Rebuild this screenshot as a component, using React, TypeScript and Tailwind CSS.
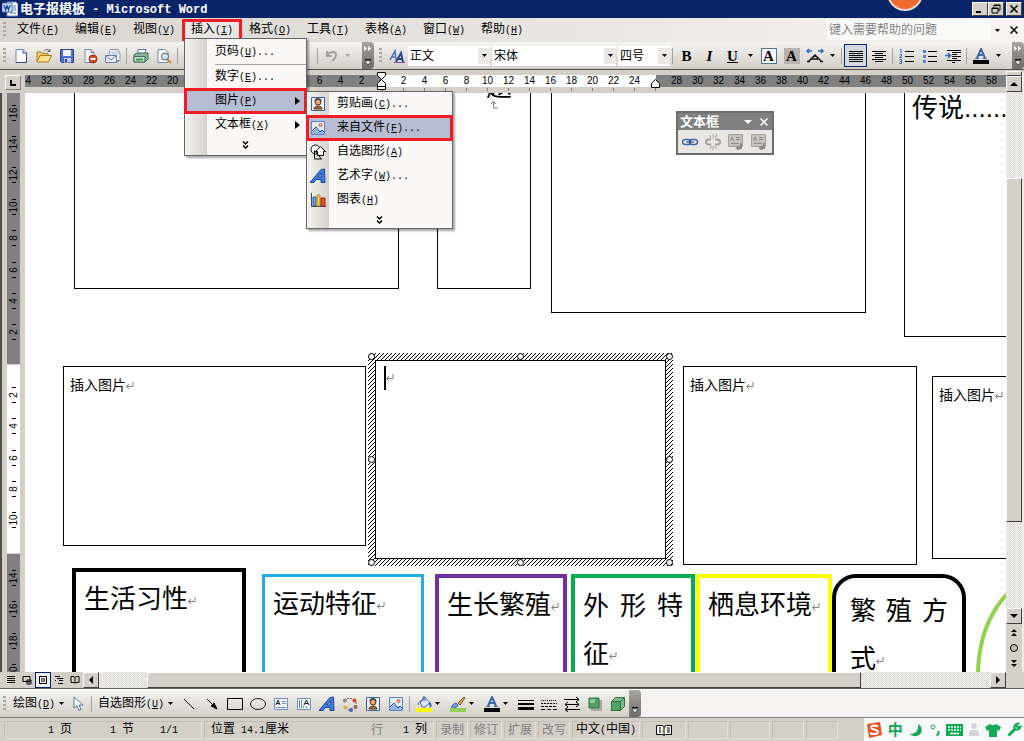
import type { ReactNode } from 'react'

const LATIN = /([\x20-\x7e]+)/

// Chinese UI text with half-width latin; `hot` is the underlined shortcut letter
function Label({ text, hot }: { text: string; hot?: string }) {
  return (
    <span className="whitespace-pre">
      {text.split(LATIN).map((part, i) =>
        i % 2 ? <span key={i} className="font-['Liberation_Mono',monospace] text-[10px]">{part}</span> : part
      )}
      {hot && (
        <span className="font-['Liberation_Mono',monospace] text-[10px]">
          (<span className="underline">{hot}</span>)
        </span>
      )}
    </span>
  )
}

function Down({ className = '' }: { className?: string }) {
  return (
    <svg width="5" height="3" viewBox="0 0 5 3" className={`shrink-0 ${className}`} aria-hidden="true">
      <path d="M0 0h5L2.5 3z" fill="currentColor" />
    </svg>
  )
}

function Svg({ children, size = 16 }: { children: ReactNode; size?: number }) {
  return (
    <svg width={size} height={size} viewBox="0 0 16 16" fill="none" aria-hidden="true" className="shrink-0">
      {children}
    </svg>
  )
}

const icons = {
  word: (
    <Svg>
      <path d="M5 1h9l2 2v12H5z" fill="#fff" stroke="#6d8fd0" />
      <path d="M11 5h3M11 7h3M11 9h3M8 12h6" stroke="#5577bb" />
      <path d="M0 2h10v9H0z" fill="#e8eefc" stroke="#3a62b8" />
      <path d="M2 4l1.500 5L5 5l1.500 4L8 4" stroke="#1e49a8" strokeWidth="1.500" />
    </Svg>
  ),
  page: (
    <Svg>
      <path d="M3 1.500h7l3.500 3.500v9.500H3z" fill="#fff" stroke="#6e86b5" />
      <path d="M10 1.500V5h3.500" fill="#c9d6ee" stroke="#3f5e9c" />
      <path d="M13.500 5v9.500H3" stroke="#2f4a80" />
    </Svg>
  ),
  open: (
    <Svg>
      <path d="M1 14V4h4l1 1.500h6V8" fill="#f3cf6a" stroke="#a87a1b" />
      <path d="M1 14l3-6.500h11.500L12.500 14z" fill="#fbdf8b" stroke="#a87a1b" />
      <path d="M8 3c2-2 4-2 5.500 0M14 1v2.500h-2.500" stroke="#555" />
    </Svg>
  ),
  save: (
    <Svg>
      <path d="M1.500 1.500h13v13h-12l-1-1z" fill="#4f6fd0" stroke="#283f94" />
      <path d="M4 2h8v6H4z" fill="#eef2fb" />
      <path d="M5 10h7v4.500H5z" fill="#c8d2ec" />
      <path d="M6 11h2v3H6z" fill="#283f94" />
    </Svg>
  ),
  permission: (
    <Svg>
      <path d="M3 1.500h6l3 3v10H3z" fill="#fff" stroke="#6e86b5" />
      <path d="M9 1.500v3h3" fill="#c9d6ee" stroke="#6e86b5" />
      <circle cx="11" cy="11" r="4" fill="#d8432c" stroke="#a42a18" />
      <path d="M8.500 11h5" stroke="#fff" strokeWidth="2" />
    </Svg>
  ),
  mail: (
    <Svg>
      <path d="M4 7l1-5.500h8L15 6v6.500h-3" fill="#fff" stroke="#8493b5" />
      <path d="M6 4h7M6 6h8" stroke="#9db0d6" />
      <path d="M.5 7.500h11v7H.5z" fill="#e6ebf6" stroke="#6d7fa8" />
      <path d="M.5 7.500L6 12l5.500-4.500M12 14l3-2" stroke="#6d7fa8" />
    </Svg>
  ),
  print: (
    <Svg>
      <path d="M5 6V1.500h8L11.500 7" fill="#fff" stroke="#5e77a8" />
      <path d="M1 7l3-2h11v6l-3 3H1z" fill="#8cb29a" stroke="#3d6b58" />
      <path d="M1 8.500h11v5.500H1z" fill="#c9ddd0" stroke="#3d6b58" />
      <path d="M3 11.500h7" stroke="#2ba84b" strokeWidth="2" />
    </Svg>
  ),
  preview: (
    <Svg>
      <path d="M2 1.500h7l3 3v10H2z" fill="#fff" stroke="#6e86b5" />
      <circle cx="9" cy="8.500" r="3.500" fill="#d3e4f7" stroke="#55616f" />
      <path d="M11.500 11.500L15 15" stroke="#c88a24" strokeWidth="2" />
    </Svg>
  ),
  undo: (
    <Svg>
      <path d="M3 3v5h5M3.500 7.500C5 3.500 12 2.500 12 7c0 3-2 4-3.500 6" stroke="#a5a29c" strokeWidth="2" />
    </Svg>
  ),
  styles: (
    <Svg>
      <path d="M1 12L6 3l1 9M2.500 9h4" stroke="#4a6fc0" strokeWidth="1.500" />
      <path d="M7 14l5-9 2 9M8.500 11h5" stroke="#2b4690" strokeWidth="2" />
      <path d="M5 14.500h11" stroke="#8c4fa8" />
    </Svg>
  ),
  scale: (
    <svg width="18" height="16" viewBox="0 0 18 16" fill="none" aria-hidden="true" className="shrink-0">
      <path d="M1 13.500h3M14 13.500h3M3 13L9 7l6 6M6 11h6" stroke="#111" strokeWidth="1.500" />
      <path d="M1 3h5M3 1L1 3l2 2M17 3h-5M15 1l2 2-2 2" stroke="#2f63c4" strokeWidth="1.500" />
    </svg>
  ),
  justify: (
    <Svg>
      <path d="M1 3.500h14M1 5.500h14M1 7.500h14M1 9.500h14M1 11.500h14M1 13.500h14" stroke="#000" shapeRendering="crispEdges" />
    </Svg>
  ),
  center: (
    <Svg>
      <path d="M1 3.500h14M4 5.500h8M1 7.500h14M4 9.500h8M1 11.500h14M4 13.500h8" stroke="#000" shapeRendering="crispEdges" />
    </Svg>
  ),
  numbered: (
    <Svg>
      <path d="M6 3.500h9M6 8.500h9M6 13.500h9" stroke="#000" shapeRendering="crispEdges" />
      <path d="M1 2l1-1v4M.5 6.500h2v1.500l-2 1.500h2.500M.5 11.500h2v4h-2M1 13.500h1.500" stroke="#3767c2" />
    </Svg>
  ),
  bullets: (
    <Svg>
      <path d="M6 3.500h9M6 8.500h9M6 13.500h9" stroke="#000" shapeRendering="crispEdges" />
      <path d="M1 2h3v3H1zM1 7h3v3H1zM1 12h3v3H1z" fill="#4f7fd0" />
    </Svg>
  ),
  indent: (
    <Svg>
      <path d="M2 2.500h14M7 4.500h9M7 6.500h5M7 8.500h9M7 10.500h5M2 12.500h14M7 14.500h3" stroke="#000" shapeRendering="crispEdges" />
      <path d="M0 7.500h5M3 5l2.500 2.500L3 10" stroke="#3767c2" strokeWidth="1.500" />
    </Svg>
  ),
  clipart: (
    <Svg>
      <path d="M1.500 1.500h13v13h-13z" fill="#eef3fb" stroke="#3c5d9e" />
      <path d="M4 13c0-4 8-4 8 0z" fill="#b06a3a" stroke="#5a3415" />
      <circle cx="8" cy="6" r="3" fill="#e6a676" stroke="#5a3415" />
      <path d="M5 5c1-3 5-3 6 0" stroke="#333" strokeWidth="1.500" />
    </Svg>
  ),
  picture: (
    <Svg>
      <path d="M1.500 1.500h13v13h-13z" fill="#e3eefb" stroke="#5c83bf" />
      <path d="M2 12l4-4 3 3 2-1 3 3v1H2z" fill="#8fb4e6" />
      <path d="M2 11l4-4 4 5 2-2 2.500 2.500" stroke="#244a8f" />
      <circle cx="10.500" cy="5" r="1.500" fill="#f6c9a5" stroke="#d3572d" />
    </Svg>
  ),
  shapes: (
    <Svg>
      <circle cx="5.500" cy="5.500" r="4.500" fill="#fff" stroke="#000" />
      <path d="M10.500 2.500l5 5h-2v4h-6v-4h-2z" fill="#fff" stroke="#000" />
      <path d="M4.500 6.500v8.500h7z" stroke="#000" />
    </Svg>
  ),
  wordart: (
    <Svg>
      <path d="M0 14.500L11 1.500l3.500-.5.500 13.500h-4v-3H6l-2 3zM8 9h3V5z" fill="#3f78d8" stroke="#1d4a9e" fillRule="evenodd" />
    </Svg>
  ),
  chart: (
    <Svg>
      <path d="M1.500 1v13.500H16" stroke="#444" />
      <path d="M3 5h3v9H3z" fill="#6fa0e8" stroke="#2c56a0" />
      <path d="M7 3h3v11H7z" fill="#f8d64e" stroke="#a7801a" />
      <path d="M11 6h4v8h-4z" fill="#e2573a" stroke="#8f2613" />
    </Svg>
  ),
  pointer: (
    <Svg>
      <path d="M4 1v11l3-2.500 2 5 2-1-2-4.500h4z" fill="#fff" stroke="#55739f" />
    </Svg>
  ),
  line: (
    <Svg>
      <path d="M3 3l10 10" stroke="#000" />
    </Svg>
  ),
  arrow: (
    <Svg>
      <path d="M3 3l6 6" stroke="#000" />
      <path d="M7 10l3-3 3 6z" fill="#000" stroke="#000" />
    </Svg>
  ),
  rect: (
    <Svg>
      <path d="M.5 2.500h15v11H.5z" stroke="#000" />
    </Svg>
  ),
  ellipse: (
    <Svg>
      <ellipse cx="8" cy="8" rx="7.500" ry="5.500" stroke="#222" />
    </Svg>
  ),
  textbox: (
    <Svg>
      <path d="M1.500 2.500h13v11h-13z" fill="#f2f6fd" stroke="#6c8fcb" />
      <path d="M3 9l2-5 2 5M4 7.500h2" stroke="#222" />
      <path d="M9 5.500h4M9 7.500h4M3 11.500h10" stroke="#6c8fcb" />
    </Svg>
  ),
  vtextbox: (
    <Svg>
      <path d="M1.500 2.500h13v11h-13z" fill="#f2f6fd" stroke="#6c8fcb" />
      <path d="M8 9l2.500-5L13 9M9 7.500h3" stroke="#222" />
      <path d="M3.500 4v8M5.500 4v8M7.500 10v2M10.500 10v2" stroke="#6c8fcb" />
    </Svg>
  ),
  diagram: (
    <Svg>
      <path d="M5 2.500h4l2 1M14 6v4M3 12l-1-2M6 14h4M2 5v1" stroke="#666" strokeDasharray="2 1" />
      <circle cx="3" cy="4.500" r="2" fill="#8a8a8a" />
      <circle cx="12.500" cy="4.500" r="2" fill="#cf4a2c" />
      <circle cx="3.500" cy="11.500" r="2" fill="#d1b13c" />
      <circle cx="9" cy="14" r="2" fill="#4a64c4" />
      <circle cx="13.500" cy="11" r="2" fill="#8a6a58" />
    </Svg>
  ),
  fill: (
    <Svg>
      <path d="M4 5.500l5-4 5 5-5 4.500h-3z" fill="#dbe7f8" stroke="#4a6ea8" />
      <path d="M7 5V1h2v4M2 9c0-2 2-4 4-4" stroke="#3c5d9e" />
      <path d="M13 7c2 1 2 3 1 4" stroke="#2f63c4" strokeWidth="2" />
      <path d="M0 12h16v4H0z" fill="#ff0" />
    </Svg>
  ),
  brush: (
    <Svg>
      <path d="M1 11c2-1 2-4 5-4l2 2c0 2-3 3-7 2z" fill="#6d9de0" stroke="#3862a8" />
      <path d="M8 7l6-6 1 1-5 7z" fill="#e4a849" stroke="#7c5317" />
      <path d="M0 12h16v4H0z" fill="#92d050" />
    </Svg>
  ),
  fontcolor: (
    <Svg>
      <path d="M4 10L8 1l4 9M5.500 7h5" stroke="#3f66ad" strokeWidth="2" />
      <path d="M2 10.500h4M10 10.500h4" stroke="#3f66ad" />
      <path d="M0 12h16v4H0z" fill="#000" />
    </Svg>
  ),
  lineStyle: (
    <Svg>
      <path d="M0 4h16v1H0zM0 7h16v2H0zM0 11h16v3H0z" fill="#000" />
    </Svg>
  ),
  dashStyle: (
    <Svg>
      <path d="M0 4.500h16" stroke="#000" strokeDasharray="1 1" />
      <path d="M0 7.500h16" stroke="#000" strokeDasharray="2 1" />
      <path d="M0 10.500h16" stroke="#000" strokeDasharray="3 1" />
      <path d="M0 13.500h16" stroke="#000" strokeDasharray="4 2" />
    </Svg>
  ),
  arrowStyle: (
    <Svg>
      <path d="M0 3.500h15M12 1l3 2.500L12 6M1 8.500h14M4 6L1 8.500 4 11M12 6l3 2.500-3 2.500M1 13.500h15M4 11l-3 2.500L4 16" stroke="#000" />
    </Svg>
  ),
  shadow: (
    <Svg>
      <path d="M4 4h11v11H4z" fill="#a9a9a2" />
      <path d="M2 2h10v10H2z" fill="#4fa365" stroke="#2c7443" />
      <path d="M3 3h5v4H3z" fill="#8bc99a" />
    </Svg>
  ),
  cube: (
    <Svg>
      <path d="M1.500 5.500l4-4h9v9l-4 4h-9z" fill="#7fb98d" stroke="#2c7443" />
      <path d="M1.500 5.500h9v9h-9z" fill="#4fa365" stroke="#2c7443" />
      <path d="M10.500 5.500l4-4" stroke="#2c7443" />
    </Svg>
  ),
  link: (
    <Svg>
      <rect x=".5" y="5.500" width="8" height="5" rx="2.500" stroke="#3f66a8" strokeWidth="1.500" />
      <rect x="7.500" y="5.500" width="8" height="5" rx="2.500" stroke="#3f66a8" strokeWidth="1.500" />
      <path d="M4 8h8" stroke="#1f3f7c" />
    </Svg>
  ),
  unlink: (
    <Svg>
      <path d="M6 5.500H3.500a2.500 2.500 0 000 5H6M10 5.500h2.500a2.500 2.500 0 010 5H10" stroke="#a5a29c" strokeWidth="2" />
      <path d="M8 0v4M4.500 1l1.500 3M12 0l-2 4M8 12v4M5 15l1.500-3M11.500 15L10 12" stroke="#a5a29c" />
    </Svg>
  ),
  boxPrev: (
    <Svg>
      <path d="M.5.5h14v12H.5z" fill="#c6c4bf" stroke="#a5a29c" />
      <path d="M2.500 7L4 3l1.500 4M8 3.500h4M8 5.500h4M3 9.500h8" stroke="#8e8c87" />
      <path d="M13 9v5h-3M11 12l-2 2 2 2" stroke="#8e8c87" strokeWidth="2" />
    </Svg>
  ),
}

function Tool({ name, label, active }: { name: keyof typeof icons; label: string; active?: boolean }) {
  return (
    <button
      aria-label={label}
      className={`flex h-[23px] w-[23px] shrink-0 items-center justify-center ${active ? 'border border-[#0a246a] bg-[#d4d7e2]' : ''}`}
    >
      {icons[name]}
    </button>
  )
}

function Grip() {
  return <span className="mx-[3px] h-4 w-[3px] shrink-0 bg-[repeating-linear-gradient(#aaa8a3_0_2px,transparent_2px_4px)]" />
}

function Sep() {
  return <span className="mx-0.5 h-4 w-px shrink-0 bg-[#a6a49e]" />
}

function EndCap({ double }: { double?: boolean }) {
  return (
    <button aria-label="工具栏选项" className="flex h-full w-3 shrink-0 flex-col items-center justify-end gap-2 rounded-r-sm bg-linear-to-b from-[#a8a6a2] to-[#6f6d69] pb-1">
      {double && (
        <svg width="8" height="5" viewBox="0 0 8 5" aria-hidden="true">
          <path d="M0 0l3 2.500L0 5zM4 0l3 2.500L4 5z" fill="#fff" />
        </svg>
      )}
      <svg width="6" height="6" viewBox="0 0 6 6" aria-hidden="true">
        <path d="M0 0h6v1H0z" fill="#000" />
        <path d="M0 2h6L3 6z" fill="#fff" stroke="#000" strokeWidth=".5" />
      </svg>
    </button>
  )
}

function Combo({ label, value, className }: { label: string; value: string; className: string }) {
  return (
    <label className={`flex h-5 shrink-0 items-center bg-white ${className}`}>
      <select aria-label={label} className="min-w-0 flex-1 appearance-none pl-0.5 leading-5 outline-none">
        <option>{value}</option>
      </select>
      <span className="flex h-4 w-3 items-center justify-center bg-[#ebe9e5]">
        <Down />
      </span>
    </label>
  )
}

function WinButton({ label, children }: { label: string; children: ReactNode }) {
  return (
    <button aria-label={label} className="flex h-[14px] w-4 items-center justify-center border border-t-white border-r-[#404040] border-b-[#404040] border-l-white bg-[#d4d0c8]">
      <svg width="10" height="10" viewBox="0 0 10 10" fill="none" stroke="#000" aria-hidden="true">
        {children}
      </svg>
    </button>
  )
}

function TitleBar() {
  return (
    <header className="relative flex h-[18px] shrink-0 items-center overflow-hidden bg-[#0a246a] px-0.5 text-white">
      {icons.word}
      <h1 className="ml-0.5 text-[13px] leading-[18px] font-bold whitespace-pre">
        电子报模板<span className="font-['Liberation_Mono',monospace] text-xs"> - Microsoft Word</span>
      </h1>
      <div className="absolute -top-[25px] right-[101px] h-9 w-9 rounded-full border-2 border-[#e6d9d2] bg-[#ef6a2c]" />
      <div className="ml-auto flex items-center">
        <WinButton label="最小化"><path d="M1 8h5" strokeWidth="2" /></WinButton>
        <WinButton label="还原"><path d="M3 3V1h6v5H7M3 1.500h6M1 4h6v5H1zM1 4.500h6" /></WinButton>
        <span className="w-0.5" />
        <WinButton label="关闭"><path d="M1.500 1.500l7 7M8.500 1.500l-7 7" strokeWidth="1.500" /></WinButton>
      </div>
    </header>
  )
}

const menus = [
  ['文件', 'F'],
  ['编辑', 'E'],
  ['视图', 'V'],
  ['插入', 'I'],
  ['格式', 'O'],
  ['工具', 'T'],
  ['表格', 'A'],
  ['窗口', 'W'],
  ['帮助', 'H'],
]

function Expand() {
  return (
    <button aria-label="展开" className="flex h-4 w-full items-center justify-center">
      <svg width="7" height="8" viewBox="0 0 7 8" fill="none" stroke="#000" strokeWidth="1.500" aria-hidden="true">
        <path d="M1 .5l2.500 2.500L6 .5M1 4.500L3.500 7 6 4.500" />
      </svg>
    </button>
  )
}

function MenuItem({ text, hot, dots, icon, sub, marked, children }: {
  text: string
  hot: string
  dots?: boolean
  icon?: keyof typeof icons
  sub?: boolean
  marked?: boolean
  children?: ReactNode
}) {
  return (
    <li className="relative">
      <button className={`flex h-6 w-full items-center ${marked ? 'bg-[#b6bdd2] outline-3 -outline-offset-2 outline-[#ee1c25]' : ''}`}>
        <span className="flex w-[22px] justify-center">{icon && icons[icon]}</span>
        <span className="ml-2">
          <Label text={text} hot={hot} />
          {dots && <Label text="..." />}
        </span>
        {sub && (
          <svg width="5" height="8" viewBox="0 0 5 8" className="mr-1.5 ml-auto" aria-hidden="true">
            <path d="M0 0l5 4-5 4z" />
          </svg>
        )}
      </button>
      {children}
    </li>
  )
}

const menuPanel =
  'absolute z-20 border border-[#666] bg-[linear-gradient(to_right,#f5f4f2,#d6d2ca_22px,#f9f8f7_22px)] shadow-[2px_2px_2px_rgba(0,0,0,0.35)]'

function InsertMenu() {
  return (
    <ul className={`${menuPanel} top-[18px] left-px w-[123px] pt-px pb-0.5`}>
      <MenuItem text="页码" hot="U" dots />
      <li className="ml-[30px] h-px bg-[#a6a6a6]" />
      <MenuItem text="数字" hot="E" dots />
      <MenuItem text="图片" hot="P" sub marked>
        <ul className={`${menuPanel} top-0.5 left-[121px] w-[147px]`}>
          <MenuItem icon="clipart" text="剪贴画" hot="C" dots />
          <MenuItem icon="picture" text="来自文件" hot="F" dots marked />
          <MenuItem icon="shapes" text="自选图形" hot="A" />
          <MenuItem icon="wordart" text="艺术字" hot="W" dots />
          <MenuItem icon="chart" text="图表" hot="H" />
          <li><Expand /></li>
        </ul>
      </MenuItem>
      <MenuItem text="文本框" hot="X" sub />
      <li><Expand /></li>
    </ul>
  )
}

function MenuBar() {
  return (
    <nav className="flex h-6 shrink-0 items-center bg-linear-to-r from-[#d8d5ce] to-[#f6f5f4] pr-0.5">
      <Grip />
      {menus.map(([text, hot]) => (
        <div key={text} className="relative">
          <button className={`h-5 w-[58px] ${text === '插入' ? 'bg-[#e9e7e3] outline-3 -outline-offset-2 outline-[#ee1c25]' : ''}`}>
            <Label text={text} hot={hot} />
          </button>
          {text === '插入' && <InsertMenu />}
        </div>
      ))}
      <input
        aria-label="键入需要帮助的问题"
        placeholder="键入需要帮助的问题"
        className="ml-auto h-5 w-[164px] bg-[#fafaf9] pl-0.5 outline-none placeholder:text-[#808080]"
      />
      <Down className="mx-1" />
      <button aria-label="关闭窗口" className="ml-0.5 flex w-4 justify-center">
        <svg width="8" height="8" viewBox="0 0 8 8" stroke="#000" strokeWidth="1.500" aria-hidden="true">
          <path d="M.5.5l7 7M7.500.5l-7 7" />
        </svg>
      </button>
    </nav>
  )
}

const letter = "flex h-[23px] w-[23px] shrink-0 items-center justify-center font-['Liberation_Serif',serif] text-[15px] font-bold"

function Toolbars() {
  return (
    <div className="flex h-[27px] shrink-0 items-stretch bg-[#dedbd5]">
      <div className="flex w-[374px] shrink-0 items-center bg-linear-to-b from-[#f5f4f2] to-[#d3cfc7]">
        <Grip />
        <Tool name="page" label="新建" />
        <Tool name="open" label="打开" />
        <Tool name="save" label="保存" />
        <Tool name="permission" label="权限" />
        <Tool name="mail" label="电子邮件" />
        <Sep />
        <Tool name="print" label="打印" />
        <Tool name="preview" label="打印预览" />
        <Sep />
        <span className="ml-auto" />
        <Sep />
        <Tool name="undo" label="撤消" />
        <Down className="mr-3 ml-0.5 text-[#a5a29c]" />
        <EndCap double />
      </div>
      <div className="flex min-w-0 flex-1 items-center bg-linear-to-b from-[#f5f4f2] to-[#d3cfc7] pl-0.5">
        <Grip />
        <Tool name="styles" label="格式窗格" />
        <Combo label="样式" value="正文" className="mr-0.5 w-[82px]" />
        <Combo label="字体" value="宋体" className="mr-0.5 w-[124px]" />
        <Combo label="字号" value="四号" className="w-[52px]" />
        <Sep />
        <button className={letter}>B</button>
        <button className={`${letter} italic`}>I</button>
        <button className={`${letter} underline`}>U</button>
        <Down className="mx-1" />
        <button aria-label="字符边框" className={letter}>
          <span className="h-4 w-4 border border-[#55739f] bg-white leading-[15px]">A</span>
        </button>
        <button aria-label="字符底纹" className={letter}>
          <span className="h-4 w-4 bg-[#b5b3af] leading-4">A</span>
        </button>
        <Tool name="scale" label="字符缩放" />
        <Down className="mx-1" />
        <Sep />
        <Tool name="justify" label="两端对齐" active />
        <Tool name="center" label="居中" />
        <Sep />
        <Tool name="numbered" label="编号" />
        <Tool name="bullets" label="项目符号" />
        <Tool name="indent" label="增加缩进量" />
        <Sep />
        <Tool name="fontcolor" label="字体颜色" />
        <Down className="mx-1" />
        <span className="ml-auto" />
        <EndCap double />
      </div>
    </div>
  )
}

const evens = (from: number, to: number) =>
  Array.from({ length: Math.abs(to - from) / 2 + 1 }, (_, i) => from + (from < to ? 2 : -2) * i)

function HCells({ nums }: { nums: number[] }) {
  return nums.map((n) => (
    <span key={n} className="w-[21px] shrink-0 text-center">{n}</span>
  ))
}

function HRuler() {
  return (
    <div className="flex h-[23px] shrink-0 items-start bg-[#d4d0c8] pt-[5px] font-['Liberation_Sans',sans-serif] text-[10px] leading-3">
      <button aria-label="制表符" className="mr-1 ml-[5px] flex h-[15px] w-4 items-center justify-center border border-white border-r-[#808080] border-b-[#808080]">
        <svg width="6" height="6" viewBox="0 0 6 6" aria-hidden="true"><path d="M0 0h2v4h4v2H0z" /></svg>
      </button>
      <div className="flex h-3 w-[357px] shrink-0 justify-end overflow-hidden bg-[#808080] pr-2.5">
        <HCells nums={evens(34, 2)} />
      </div>
      <div className="relative flex h-3 w-[274px] shrink-0 bg-white pl-[11px]">
        <HCells nums={evens(2, 24)} />
        <span className="absolute top-[13px] right-0 left-0 h-[3px] bg-[repeating-linear-gradient(to_right,#808080_0_1px,transparent_1px_21px)]" />
        <svg width="10" height="18" viewBox="0 0 10 18" fill="#fff" stroke="#000" className="absolute -top-[3px] -left-[5px]" aria-hidden="true">
          <path d="M.5.5h8v3l-4 4-4-4zM.5 14.500v-3l4-4 4 4v3zM.5 14.500h8v3h-8z" />
        </svg>
        <svg width="10" height="9" viewBox="0 0 10 9" fill="#fff" stroke="#000" className="absolute top-1 -right-[5px]" aria-hidden="true">
          <path d="M.5 8.500v-4l4-4 4 4v4z" />
        </svg>
      </div>
      <div className="flex h-3 min-w-0 flex-1 overflow-hidden bg-[#808080] pl-2.5">
        <HCells nums={evens(28, 58)} />
      </div>
      <div className="w-[18px] shrink-0" />
    </div>
  )
}

function VCells({ nums }: { nums: number[] }) {
  return nums.map((n) => (
    <div key={n} className="flex flex-1 flex-col items-center justify-center gap-px">
      <span className="h-px w-1 bg-black" />
      <span className="flex h-3 w-3 items-center justify-center">
        <span className="-rotate-90">{n}</span>
      </span>
      <span className="h-px w-1 bg-black" />
    </div>
  ))
}

function VRuler() {
  return (
    <div className="flex w-[25px] shrink-0 flex-col overflow-hidden border-l-2 border-[#505050] bg-[#d4d0c8] pr-[5px] pl-[5px] font-['Liberation_Sans',sans-serif] text-[10px] leading-3">
      <div className="flex h-[271px] shrink-0 flex-col bg-[#808080] pt-1 pb-4">
        <VCells nums={evens(16, 2)} />
      </div>
      <div className="my-px flex h-[188px] shrink-0 flex-col bg-white pt-[14px] pb-[17px]">
        <VCells nums={evens(2, 10)} />
      </div>
      <div className="flex min-h-0 flex-1 flex-col overflow-hidden bg-[#808080] pt-2">
        <div className="flex h-[126px] shrink-0 flex-col">
          <VCells nums={evens(14, 20)} />
        </div>
      </div>
    </div>
  )
}

function Return() {
  return (
    <svg width="8" height="8" viewBox="0 0 8 8" fill="none" stroke="#808080" className="inline-block" aria-hidden="true">
      <path d="M7 0v4.500H1M3 2L.5 4.500 3 7" />
    </svg>
  )
}

function Handle({ className }: { className: string }) {
  return <span className={`absolute h-[7px] w-[7px] rounded-full border border-black bg-white ${className}`} />
}

function Hatch() {
  return (
    <svg className="absolute inset-0 h-full w-full" shapeRendering="crispEdges" aria-hidden="true">
      <pattern id="hatch" width="4" height="4" patternUnits="userSpaceOnUse">
        <path d="M0 3h1v1H0zM1 2h1v1H1zM2 1h1v1H2zM3 0h1v1H3z" />
      </pattern>
      <rect width="100%" height="100%" fill="url(#hatch)" />
    </svg>
  )
}

function FloatingToolbar() {
  return (
    <section className="absolute top-[18px] left-[651px] w-[98px] border-2 border-[#6e6c69] bg-[#e9e7e3]">
      <div className="flex h-[17px] items-center bg-[#808080] pr-1 pl-0.5 text-[13px] leading-4 font-bold text-white">
        文本框
        <svg width="8" height="4" viewBox="0 0 8 4" className="mr-2 ml-auto" aria-hidden="true"><path d="M0 0h8L4 4z" fill="#fff" /></svg>
        <button aria-label="关闭工具栏">
          <svg width="8" height="8" viewBox="0 0 8 8" stroke="#fff" strokeWidth="1.500" aria-hidden="true"><path d="M.5.5l7 7M7.500.5l-7 7" /></svg>
        </button>
      </div>
      <div className="flex">
        <Tool name="link" label="创建链接" />
        <Tool name="unlink" label="断开链接" />
        <Tool name="boxPrev" label="前一文本框" />
        <Tool name="boxPrev" label="下一文本框" />
      </div>
    </section>
  )
}

// Text boxes sit at free positions on the page
function Canvas() {
  return (
    <main className="relative min-w-0 flex-1 overflow-hidden bg-white text-[26px] leading-9">
      <div className="absolute -top-1 left-[49px] h-[200px] w-[325px] border border-black" />
      <div className="absolute -top-1 left-[412px] h-[200px] w-[94px] border border-black" />
      <div className="absolute -top-6 left-[461px]">题</div>
      <div className="absolute top-2 left-[465px] flex rotate-90"><Return /></div>
      <div className="absolute -top-1 left-[526px] h-[224px] w-[315px] border border-black" />
      <div className="absolute -top-1 left-[879px] h-[248px] w-[120px] border border-black pl-[7px] whitespace-nowrap">
        传说<span className="font-['Liberation_Sans',sans-serif]">.........</span>
      </div>

      <div className="absolute top-[273px] left-[38px] h-[180px] w-[303px] border border-black px-1.5 pt-2 text-sm">插入图片<Return /></div>
      <div className="absolute top-[260px] left-[343px] h-[213px] w-[305px] bg-white p-[7px]">
        <Hatch />
        <div className="relative h-full border border-black bg-white px-2 py-1 text-sm leading-6">
          <span className="inline-block h-6 w-0.5 bg-black align-middle" /><Return />
        </div>
        <Handle className="top-0 left-0" />
        <Handle className="top-0 left-[149px]" />
        <Handle className="top-0 right-0" />
        <Handle className="top-[103px] left-0" />
        <Handle className="top-[103px] right-0" />
        <Handle className="bottom-0 left-0" />
        <Handle className="bottom-0 left-[149px]" />
        <Handle className="right-0 bottom-0" />
      </div>
      <div className="absolute top-[273px] left-[658px] h-[199px] w-[234px] border border-black px-1.5 pt-2 text-sm">插入图片<Return /></div>
      <div className="absolute top-[283px] left-[907px] h-[183px] w-[120px] border border-black px-1.5 pt-2 text-sm">插入图片<Return /></div>

      <div className="absolute top-[475px] left-[47px] h-[200px] w-[174px] border-4 border-black px-2 py-[9px]">生活习性<Return /></div>
      <div className="absolute top-[481px] left-[237px] h-[200px] w-[162px] border-3 border-[#1eaee4] px-2 py-[9px]">运动特征<Return /></div>
      <div className="absolute top-[481px] left-[410px] h-[200px] w-[132px] border-4 border-[#7030a0] px-2 py-[9px] whitespace-nowrap">生长繁殖<Return /></div>
      <div className="absolute top-[481px] left-[546px] h-[200px] w-[124px] border-4 border-[#00b050] px-2 py-1 leading-12">
        <p className="[text-align-last:justify]">外 形 特</p>
        <p>征<Return /></p>
      </div>
      <div className="absolute top-[481px] left-[671px] h-[200px] w-[136px] border-4 border-[#ff0] px-2 py-[9px] whitespace-nowrap">栖息环境<Return /></div>
      <div className="absolute top-[481px] left-[807px] h-[200px] w-[134px] rounded-[24px] border-4 border-black px-[14px] py-[9px] leading-12">
        <p className="[text-align-last:justify]">繁 殖 方</p>
        <p>式<Return /></p>
      </div>
      <svg width="120" height="200" viewBox="0 0 120 200" fill="none" className="absolute top-[481px] left-[950px]" aria-hidden="true">
        <ellipse cx="68" cy="102" rx="65" ry="98" stroke="#92d050" strokeWidth="4" />
      </svg>
      <FloatingToolbar />
    </main>
  )
}

const track = 'bg-[repeating-conic-gradient(#d4d0c8_0_25%,#fff_0_50%)] bg-[length:2px_2px]'
const raised = 'border border-white border-r-[#404040] border-b-[#404040] bg-[#d4d0c8]'

function ScrollButton({ label, d }: { label: string; d: string }) {
  return (
    <button aria-label={label} className={`flex h-4 w-4 shrink-0 items-center justify-center ${raised}`}>
      <svg width="8" height="8" viewBox="0 0 8 8" aria-hidden="true"><path d={d} /></svg>
    </button>
  )
}

function VScroll() {
  return (
    <div className="-mt-[22px] flex w-[18px] shrink-0 flex-col border-r-2 border-[#ecebe8] bg-[#d4d0c8]">
      <div className={`h-[5px] shrink-0 ${raised}`} />
      <ScrollButton label="向上滚动" d="M0 6h8L4 2z" />
      <div className={`flex flex-1 flex-col ${track}`}>
        <div className="grow-[86]" />
        <div className={`grow-[344] ${raised}`} />
        <div className="grow-[87]" />
      </div>
      <ScrollButton label="向下滚动" d="M0 2h8L4 6z" />
      <div className="flex h-12 shrink-0 flex-col items-center justify-around">
        <button aria-label="前一页"><svg width="6" height="8" viewBox="0 0 6 8"><path d="M0 4h6L3 1zM0 8h6L3 5z" /></svg></button>
        <button aria-label="选择浏览对象" className="h-2 w-2 rounded-full border border-black bg-[#c0bdb5]" />
        <button aria-label="下一页"><svg width="6" height="8" viewBox="0 0 6 8"><path d="M0 0h6L3 3zM0 4h6L3 7z" /></svg></button>
      </div>
    </div>
  )
}

const views = [
  { label: '普通视图', d: 'M1 1.500h8M1 3.500h8M1 5.500h8M1 7.500h8' },
  { label: 'Web 版式视图', d: 'M1 1.500h7v5H1zM5 5h4v4H5zM6 7h2' },
  { label: '页面视图', d: 'M1.500 1.500h7v7h-7zM3 4h4M3 6h4' },
  { label: '大纲视图', d: 'M1 1.500h5M3 3.500h6M1 5.500h1M5 5.500h4M4 8.500h5' },
  { label: '阅读版式', d: 'M1 1.500h3l1 1 1-1h3v6H6l-1 1-1-1H1zM5 2v6' },
]

function HScroll() {
  return (
    <div className="flex h-[17px] shrink-0 items-center border-b border-[#606060] bg-[#d4d0c8] pl-[3px]">
      {views.map((v, i) => (
        <button key={v.label} aria-label={v.label} className={`flex h-4 w-4 shrink-0 items-center justify-center ${i === 2 ? 'border border-[#0a246a] bg-[#eceef4]' : ''}`}>
          <svg width="10" height="10" viewBox="0 0 10 10" fill="none" stroke="#000" aria-hidden="true"><path d={v.d} /></svg>
        </button>
      ))}
      <ScrollButton label="向左滚动" d="M6 0v8L2 4z" />
      <div className={`flex h-4 flex-1 ${track}`}>
        <div className="grow-[48]" />
        <div className={`grow-[715] ${raised}`} />
        <div className="grow-[130]" />
      </div>
      <ScrollButton label="向右滚动" d="M2 0v8l4-4z" />
      <span className="w-[18px] shrink-0" />
    </div>
  )
}

function DrawingBar() {
  return (
    <div className="flex h-7 shrink-0 items-stretch border-t border-white bg-[#f4f3f1]">
      <div className="flex items-center bg-linear-to-b from-[#f5f4f2] to-[#d3cfc7]">
        <Grip />
        <button className="mr-0.5 ml-1 flex items-center gap-1"><Label text="绘图" hot="D" /><Down /></button>
        <Tool name="pointer" label="选择对象" />
        <Sep />
        <button className="mr-1 ml-1 flex items-center gap-1"><Label text="自选图形" hot="U" /><Down /></button>
        <Tool name="line" label="直线" />
        <Tool name="arrow" label="箭头" />
        <Tool name="rect" label="矩形" />
        <Tool name="ellipse" label="椭圆" />
        <Tool name="textbox" label="文本框" />
        <Tool name="vtextbox" label="竖排文本框" />
        <Tool name="wordart" label="插入艺术字" />
        <Tool name="diagram" label="插入图示" />
        <Tool name="clipart" label="插入剪贴画" />
        <Tool name="picture" label="插入图片" />
        <Sep />
        <Tool name="fill" label="填充颜色" />
        <Down className="mr-1.5" />
        <Tool name="brush" label="线条颜色" />
        <Down className="mr-1.5" />
        <Tool name="fontcolor" label="字体颜色" />
        <Down className="mr-1.5" />
        <Tool name="lineStyle" label="线型" />
        <Tool name="dashStyle" label="虚线线型" />
        <Tool name="arrowStyle" label="箭头样式" />
        <Tool name="shadow" label="阴影样式" />
        <Tool name="cube" label="三维效果样式" />
        <EndCap />
      </div>
    </div>
  )
}

const panel = 'flex h-[18px] shrink-0 items-center border border-[#e4e1db] border-t-[#c2beb6] border-l-[#c2beb6]'

function StatusBar() {
  return (
    <footer className="flex h-6 shrink-0 items-center gap-0.5 border-t border-[#808080] bg-[#d4d0c8] pl-1">
      <div className={`${panel} w-[198px] pl-[43px]`}>
        <span className="w-[62px]"><Label text="1 页" /></span>
        <span className="w-[50px]"><Label text="1 节" /></span>
        <Label text="1/1" />
      </div>
      <div className={`${panel} w-[230px] pl-1.5`}>
        <span className="w-40"><Label text="位置 14.1厘米" /></span>
        <span className="w-8 text-[#808080]">行</span>
        <Label text="1 列" />
      </div>
      {['录制', '修订', '扩展', '改写'].map((s) => (
        <div key={s} className={`${panel} w-8 justify-center text-[#808080]`}>{s}</div>
      ))}
      <div className={`${panel} w-[68px] justify-center`}><Label text="中文(中国)" /></div>
      <div className={`${panel} w-11 justify-center`}>
        <svg width="16" height="12" viewBox="0 0 16 12" fill="#fff" stroke="#000" aria-hidden="true">
          <path d="M.5 1.500h6L8 3l1.500-1.500h6v9h-6L8 11.500l-1.500-1H.5zM8 3v8.500M3 4h2M3 6h2M3 8h2M11 4h3M11 6h3M11 8h3" />
          <path d="M6 8l5-7" stroke="#8b7b3a" />
        </svg>
      </div>
      <div className={`${panel} w-10`} />
      <div className={`${panel} w-10`} />
      <div className={`${panel} w-8`} />
      <div className={`${panel} w-8`} />
      <Ime />
    </footer>
  )
}

function Ime() {
  return (
    <div className="ml-auto flex h-6 w-40 shrink-0 items-center justify-between bg-[#f7f9fa] px-0.5 text-[15px] font-bold text-[#12a955]">
      <svg width="16" height="16" viewBox="0 0 16 16" fill="none" aria-hidden="true">
        <path d="M1 2l13-2 2 13-13 3z" fill="#e8521f" />
        <path d="M12 4.500C8 3 5 3.500 5 5.500c0 2.500 7 1.500 7 4.500 0 2-4 3-8 1" stroke="#fff" strokeWidth="2" />
      </svg>
      <span className="leading-5">中</span>
      <svg width="14" height="14" viewBox="0 0 14 14" fill="currentColor" aria-hidden="true"><path d="M9 1c5 3 5 9 0 11.500-3 1.300-6 .5-8-1.500C7 11 10 7 9 1z" /></svg>
      <svg width="12" height="14" viewBox="0 0 12 14" fill="none" stroke="currentColor" aria-hidden="true"><circle cx="4" cy="4" r="2" /><path d="M9.500 8v2c0 1.500-1 2-2 2.500" strokeWidth="2" /></svg>
      <svg width="17" height="12" viewBox="0 0 17 12" aria-hidden="true"><path d="M0 0h17v12H0z" fill="currentColor" /><path d="M2 3h13M2 6h13" stroke="#fff" strokeWidth="1.500" strokeDasharray="2 1" /><path d="M4 9.500h9" stroke="#fff" strokeWidth="1.500" /></svg>
      <svg width="10" height="13" viewBox="0 0 10 13" fill="#d3d6d8" aria-hidden="true"><circle cx="5" cy="3" r="3" /><path d="M0 13V9c0-3 10-3 10 0v4z" /></svg>
      <svg width="16" height="14" viewBox="0 0 16 14" fill="currentColor" aria-hidden="true"><path d="M5 1c1.500 1.500 4.500 1.500 6 0l5 3-2 4-2-1v7H4V7L2 8 0 4z" /></svg>
      <svg width="15" height="15" viewBox="0 0 15 15" fill="none" stroke="currentColor" aria-hidden="true"><path d="M1.500 13.500L8 7" strokeWidth="3" /><path d="M11 1.500C7.500 2 6.500 5 8 7c2 1.500 5 .5 5.500-2.500l-2.500 1-1.500-1.500z" strokeWidth="2" /></svg>
    </div>
  )
}

export default function App() {
  return (
    <div className="flex h-screen flex-col overflow-hidden bg-[#d4d0c8] font-['Liberation_Sans','Noto_Sans_CJK_SC',sans-serif] text-xs leading-4 text-black">
      <TitleBar />
      <MenuBar />
      <Toolbars />
      <div className="flex min-h-0 flex-1 flex-col border-t border-[#505050]">
        <HRuler />
        <div className="flex min-h-0 flex-1">
          <VRuler />
          <Canvas />
          <VScroll />
        </div>
        <HScroll />
      </div>
      <DrawingBar />
      <StatusBar />
    </div>
  )
}
